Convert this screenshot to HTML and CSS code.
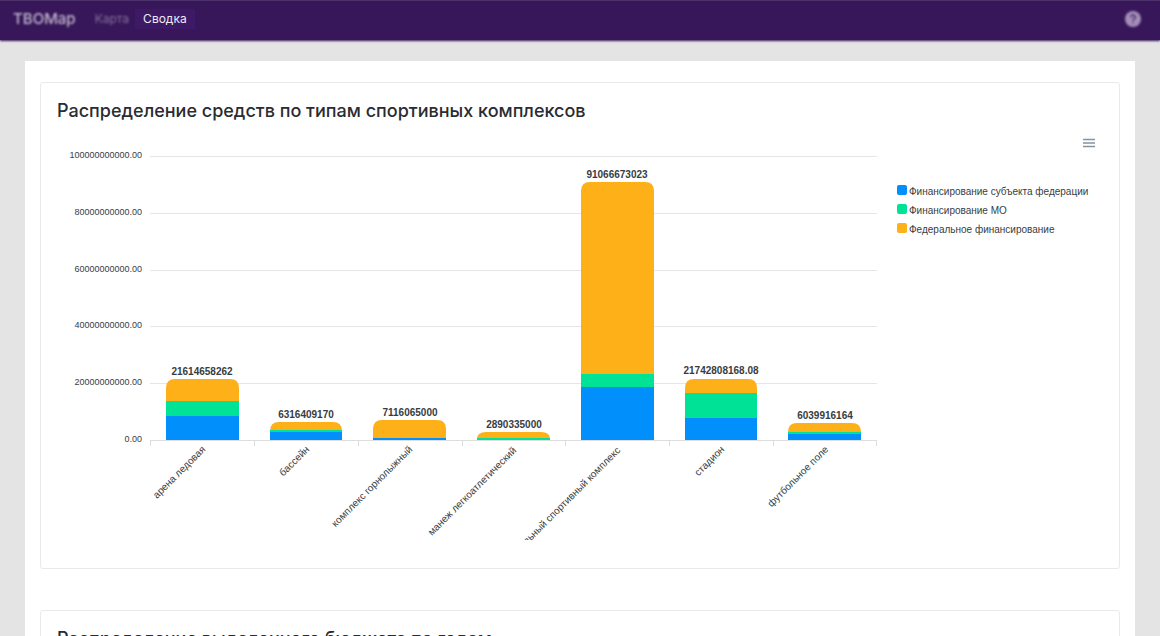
FILE: index.html
```html
<!DOCTYPE html>
<html lang="ru">
<head>
<meta charset="utf-8">
<meta name="viewport" content="width=device-width, initial-scale=1">
<title>ТВОМар — Сводка</title>
<link rel="stylesheet" href="styles.css">
</head>
<body>
<header class="topbar">
  <a class="brand" href="#">ТВОМар</a>
  <nav class="nav">
    <a class="nav-link nav-link-muted" href="#">Карта</a>
    <a class="nav-link nav-link-active" href="#" aria-current="page">Сводка</a>
  </nav>
  <button class="help" type="button" aria-label="Справка">
    <svg width="16" height="16" viewBox="0 0 16 16" aria-hidden="true">
      <circle cx="8" cy="8" r="8" fill="#a48fb8"/>
      <path d="M5.8 6.2a2.2 2.2 0 1 1 3.3 1.9C8.300 8.600 8 8.900 8 9.700M8 11.300v1.200" fill="none" stroke="#4b2b6d" stroke-width="1.600"/>
    </svg>
  </button>
</header>
<main class="page">
  <div class="panel">
    <section class="card">
      <h2 class="card-title">Распределение средств по типам спортивных комплексов</h2>
      <div class="chart">
        <svg class="plot" viewBox="0 0 826 404" role="img" aria-label="Распределение средств по типам спортивных комплексов">
          <g class="grid">
            <path d="M93 20.500H820M93 77.500H820M93 134.500H820M93 190.500H820M93 247.500H820"/>
          </g>
          <g class="axis">
            <path d="M93 304.500H820M93.500 304v6M197.500 304v6M301.500 304v6M405.500 304v6M508.500 304v6M612.500 304v6M716.500 304v6M819.500 304v6"/>
          </g>
          <g class="tick-labels">
            <text x="85" y="22">100000000000.00</text>
            <text x="85" y="79">80000000000.00</text>
            <text x="85" y="136">60000000000.00</text>
            <text x="85" y="192">40000000000.00</text>
            <text x="85" y="249">20000000000.00</text>
            <text x="85" y="306">0.00</text>
          </g>
          <g class="federal">
            <path d="M109 265v-13q0-9 9-9h55q9 0 9 9v13z"/>
            <path d="M213 294v1q0-9 9-9h54q9 0 9 9v-1z"/>
            <path d="M316 303v-10q0-9 9-9h55q9 0 9 9v10z"/>
            <path d="M420 303q0-7 9-7h55q9 0 9 7z"/>
            <path d="M524 238V55q0-9 9-9h55q9 0 9 9v183z"/>
            <path d="M628 257v-5q0-9 9-9h54q9 0 9 9v5z"/>
            <path d="M731 296q0-9 9-9h55q9 0 9 9z"/>
          </g>
          <g class="municipal">
            <rect x="109" y="265" width="73" height="15"/>
            <rect x="213" y="294" width="72" height="2"/>
            <rect x="420" y="302" width="73" height="2"/>
            <rect x="524" y="238" width="73" height="13"/>
            <rect x="628" y="257" width="72" height="25"/>
            <rect x="731" y="296" width="73" height="2"/>
          </g>
          <g class="regional">
            <rect x="109" y="280" width="73" height="24"/>
            <rect x="213" y="296" width="72" height="8"/>
            <rect x="316" y="302" width="73" height="2"/>
            <rect x="524" y="251" width="73" height="53"/>
            <rect x="628" y="282" width="72" height="22"/>
            <rect x="731" y="298" width="73" height="6"/>
          </g>
          <g class="totals">
            <text x="145" y="239">21614658262</text>
            <text x="249" y="282">6316409170</text>
            <text x="353" y="280">7116065000</text>
            <text x="457" y="292">2890335000</text>
            <text x="560" y="42">91066673023</text>
            <text x="664" y="238">21742808168.08</text>
            <text x="768" y="283">6039916164</text>
          </g>
          <g class="categories">
            <text transform="translate(149 314) rotate(-45)">арена ледовая</text>
            <text transform="translate(253 314) rotate(-45)">бассейн</text>
            <text transform="translate(356 314) rotate(-45)">комплекс горнолыжный</text>
            <text transform="translate(460 315) rotate(-45)">манеж легкоатлетический</text>
            <text transform="translate(564 315) rotate(-45)">универсальный спортивный комплекс</text>
            <text transform="translate(668 314) rotate(-45)">стадион</text>
            <text transform="translate(772 314) rotate(-45)">футбольное поле</text>
          </g>
        </svg>
        <div class="chart-side">
          <button class="chart-menu" type="button" aria-label="Меню графика">
            <svg width="14" height="10" viewBox="0 0 14 10" aria-hidden="true">
              <path d="M1 1.500h12M1 5h12M1 8.500h12" stroke="#8592a0" stroke-width="1.400"/>
            </svg>
          </button>
          <ul class="legend">
            <li class="legend-item"><span class="marker marker-regional"></span>Финансирование субъекта федерации</li>
            <li class="legend-item"><span class="marker marker-municipal"></span>Финансирование МО</li>
            <li class="legend-item"><span class="marker marker-federal"></span>Федеральное финансирование</li>
          </ul>
        </div>
      </div>
    </section>
    <section class="card">
      <h2 class="card-title">Распределение выделенного бюджета по годам</h2>
    </section>
  </div>
</main>
</body>
</html>
```
FILE: styles.css
```css
* {
  box-sizing: border-box;
}

html {
  scrollbar-width: none;
}

body {
  margin: 0;
  background: #e4e4e4;
  color: #292c31;
  font-family: Inter, "Liberation Sans", sans-serif;
}

.topbar {
  display: flex;
  align-items: center;
  height: 40px;
  padding: 0 19px 4px 13px;
  border-top: 1px solid #4c316b;
  background: #37175a;
  box-shadow: 0 1px 2px #37175a;
}

.brand {
  color: #c3b9ce;
  font-size: 15px;
  font-weight: 500;
  line-height: 20px;
  text-decoration: none;
  filter: blur(1px);
}

.nav {
  display: flex;
  margin-left: 11px;
}

.nav-link {
  padding: 0 8px;
  font-size: 12px;
  line-height: 20px;
  text-decoration: none;
}

.nav-link-muted {
  padding-right: 6px;
  color: #86739c;
  filter: blur(1px);
}

.nav-link-active {
  background: #3e1a66;
  color: #eeeaf2;
}

.help {
  display: flex;
  margin-left: auto;
  padding: 0;
  border: 0;
  background: none;
  filter: blur(1px);
}

.page {
  padding: 21px 25px;
}

.panel {
  display: grid;
  gap: 41px;
  padding: 21px 15px;
  background: #fff;
}

.card {
  padding: 15px 16px 28px;
  border: 1px solid #e9e9e9;
  border-radius: 3px;
}

.card-title {
  margin: 0 0 13px;
  font-size: 18px;
  font-weight: 500;
  line-height: 25px;
}

.chart {
  display: flex;
  gap: 14px;
  font-family: "Liberation Sans", Arial, sans-serif;
}

.plot {
  flex: 1;
  min-width: 0;
}

.grid path {
  stroke: #e6e6e6;
}

.axis path {
  fill: none;
  stroke: #dedede;
}

.tick-labels {
  fill: #373d3f;
  font-size: 9px;
  text-anchor: end;
}

.totals {
  fill: #373d3f;
  font-size: 10px;
  font-weight: 700;
  text-anchor: middle;
}

.categories {
  fill: #373d3f;
  font-size: 10px;
  text-anchor: end;
}

.regional {
  fill: #008ffb;
}

.municipal {
  fill: #00e396;
}

.federal {
  fill: #feb019;
}

.chart-side {
  width: 206px;
}

.chart-menu {
  display: block;
  margin: 0 7px 0 auto;
  padding: 2px 0;
  border: 0;
  background: none;
}

.chart-menu svg {
  display: block;
}

.legend {
  display: grid;
  margin: 32px 0 0;
  padding: 0;
  color: #373d3f;
  font-size: 10px;
  line-height: 19px;
  list-style: none;
}

.legend-item {
  display: flex;
  align-items: flex-start;
  gap: 2px;
  white-space: nowrap;
}

.marker {
  width: 10px;
  height: 10px;
  margin-top: 3px;
  border-radius: 2px;
}

.marker-regional {
  background: #008ffb;
}

.marker-municipal {
  background: #00e396;
}

.marker-federal {
  background: #feb019;
}
```
